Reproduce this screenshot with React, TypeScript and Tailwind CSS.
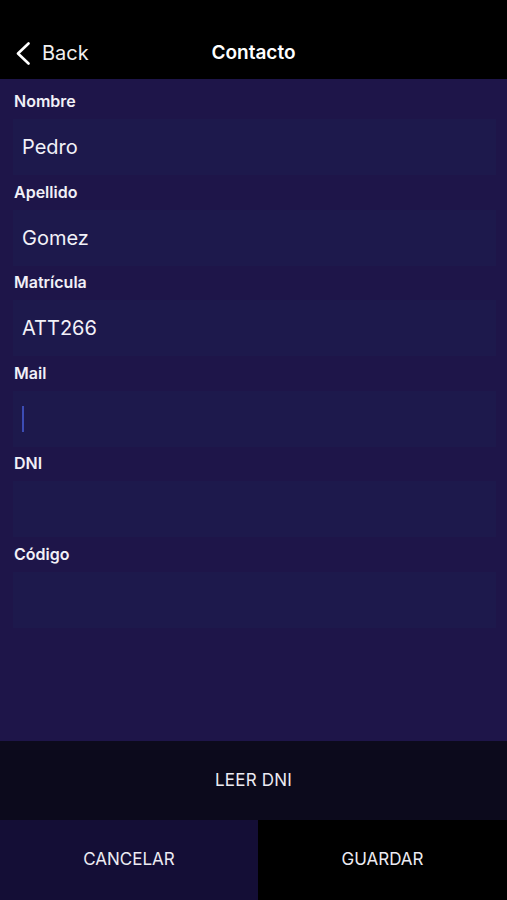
const fields = [
  { label: "Nombre", value: "Pedro" },
  { label: "Apellido", value: "Gomez" },
  { label: "Matrícula", value: "ATT266" },
  { label: "Mail", value: "", focused: true },
  { label: "DNI", value: "" },
  { label: "Código", value: "" },
];

const App = () => {
  return (
    <div
      className="w-[507px] h-[900px] flex flex-col bg-[#1e1549] text-white overflow-hidden"
      style={{ fontFamily: "Inter, 'Liberation Sans', sans-serif" }}
    >
      {/* nav bar */}
      <div className="h-[79px] bg-black flex items-center relative pt-[27px] shrink-0">
        <div className="flex items-center pl-[15px] gap-[10px]">
          <svg width="17" height="23" viewBox="0 0 17 23" fill="none">
            <polyline
              points="13.5,1.5 3,11.5 13.5,21.5"
              stroke="white"
              strokeWidth="2.6"
              strokeLinecap="round"
              strokeLinejoin="round"
            />
          </svg>
          <span className="text-[20px] text-[#f0f0f0]">Back</span>
        </div>
        <span className="absolute left-0 right-0 text-center text-[19px] font-semibold pointer-events-none">
          Contacto
        </span>
      </div>

      {/* form */}
      <div className="flex-1 flex flex-col pt-[12px]">
        {fields.map((f) => (
          <div key={f.label} className="flex flex-col mb-[6.5px]">
            <span className="h-[20px] leading-[20px] px-[14px] text-[16px] font-semibold text-[#f1f0f7]">
              {f.label}
            </span>
            <div className="mt-[8px] ml-[13px] mr-[11px] h-[56px] bg-[#1d194c] flex items-center px-[9px]">
              {f.focused ? (
                <div className="w-[2px] h-[26px] bg-[#3c4cb4]" />
              ) : (
                <span className="text-[20px] text-[#f2f1f8]">{f.value}</span>
              )}
            </div>
          </div>
        ))}
      </div>

      {/* actions */}
      <button className="h-[79px] shrink-0 bg-[#0c0a1c] text-[17px] text-[#ecebf2] tracking-[0.2px]">
        LEER DNI
      </button>
      <div className="h-[80px] shrink-0 flex">
        <button className="w-[258px] bg-[#140e36] text-[17px] text-[#ecebf2]">CANCELAR</button>
        <button className="flex-1 bg-black text-[17px] text-[#ecebf2]">GUARDAR</button>
      </div>
    </div>
  );
};

export default App;
